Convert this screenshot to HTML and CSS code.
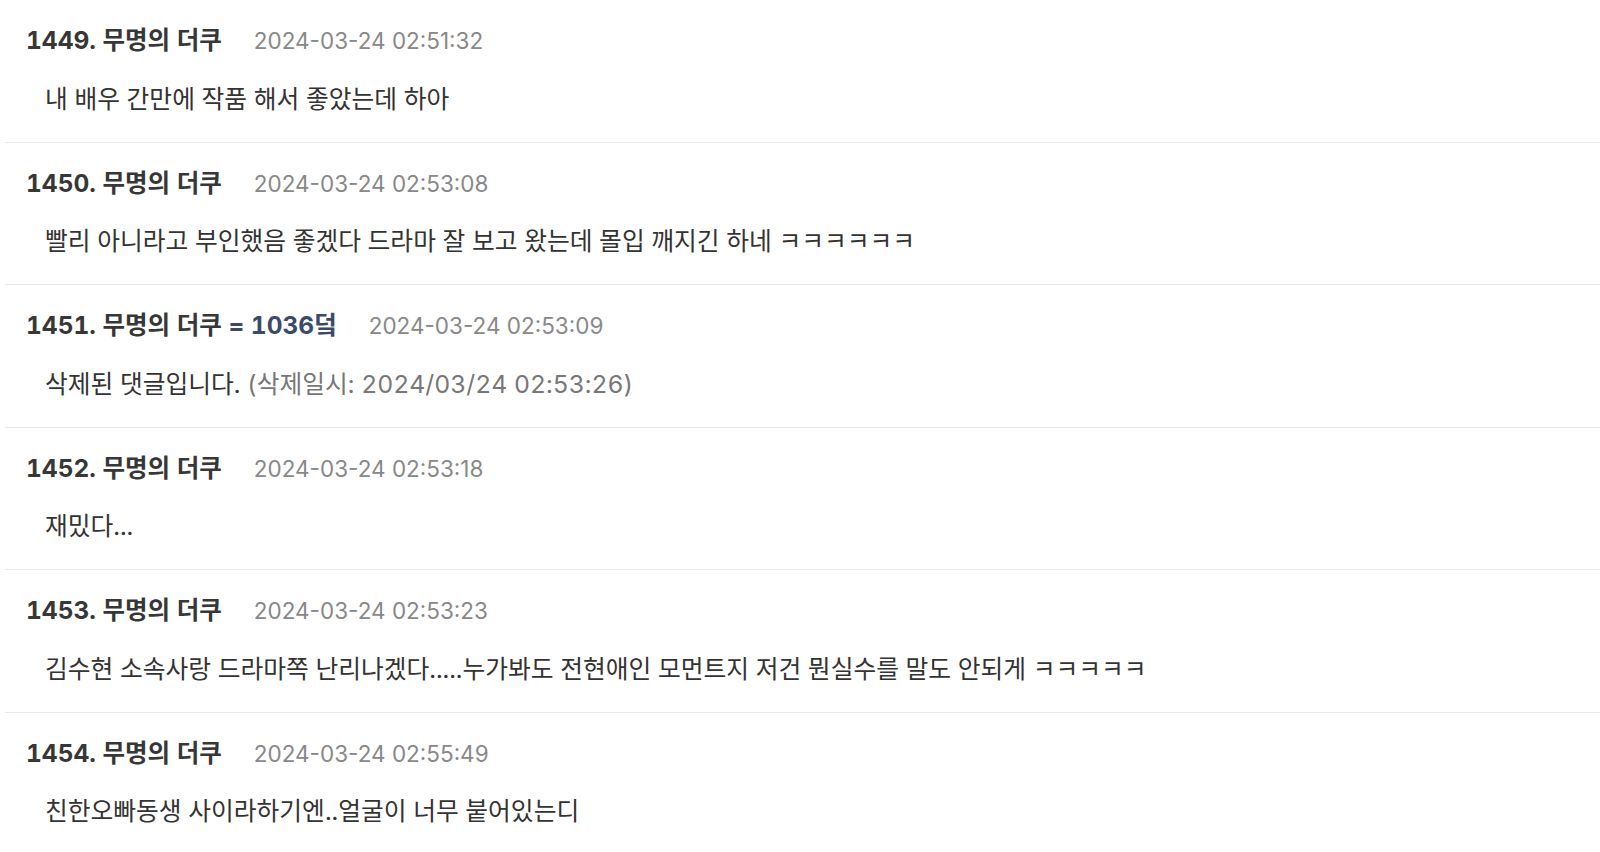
FILE: index.html
```html
<!DOCTYPE html>
<html lang="ko">
    <head>
        <meta charset="UTF-8">
        <title>댓글</title>
        <link rel="stylesheet" href="styles.css">
    </head>
    <body>
        <!-- 댓글 목록 -->
        <div class="comment-list">
            <div class="comment">
                <div class="comment-head">
                    <span class="comment-author">1449. 무명의 더쿠</span>
                    <span class="comment-date">2024-03-24 02:51:32</span>
                </div>
                <div class="comment-body">내 배우 간만에 작품 해서 좋았는데 하아</div>
            </div>

            <div class="comment">
                <div class="comment-head">
                    <span class="comment-author">1450. 무명의 더쿠</span>
                    <span class="comment-date">2024-03-24 02:53:08</span>
                </div>
                <div class="comment-body">빨리 아니라고 부인했음 좋겠다 드라마 잘 보고 왔는데 몰입 깨지긴 하네 ㅋㅋㅋㅋㅋㅋ</div>
            </div>

            <div class="comment">
                <div class="comment-head">
                    <span class="comment-author">1451. 무명의 더쿠 <span class="comment-count">= 1036덬</span></span>
                    <span class="comment-date">2024-03-24 02:53:09</span>
                </div>
                <div class="comment-body">삭제된 댓글입니다. <span class="deleted-at">(삭제일시: 2024/03/24 02:53:26)</span></div>
            </div>

            <div class="comment">
                <div class="comment-head">
                    <span class="comment-author">1452. 무명의 더쿠</span>
                    <span class="comment-date">2024-03-24 02:53:18</span>
                </div>
                <div class="comment-body">재밌다...</div>
            </div>

            <div class="comment">
                <div class="comment-head">
                    <span class="comment-author">1453. 무명의 더쿠</span>
                    <span class="comment-date">2024-03-24 02:53:23</span>
                </div>
                <div class="comment-body">김수현 소속사랑 드라마쪽 난리나겠다.....누가봐도 전현애인 모먼트지 저건 뭔실수를 말도 안되게 ㅋㅋㅋㅋㅋ</div>
            </div>

            <div class="comment">
                <div class="comment-head">
                    <span class="comment-author">1454. 무명의 더쿠</span>
                    <span class="comment-date">2024-03-24 02:55:49</span>
                </div>
                <div class="comment-body">친한오빠동생 사이라하기엔..얼굴이 너무 붙어있는디</div>
            </div>
        </div>
    </body>
</html>
```

FILE: styles.css
```css
/* === 기본 === */
body {
    margin: 0;
    background: #ffffff;
    color: #333333;
    font-family: Inter, "Noto Sans CJK KR", sans-serif;
}

/* === 댓글 목록 === */
.comment-list {
    padding-left: 5px;
}

.comment {
    padding: 24px 0 27px 21px;
    border-bottom: 1px solid #e9e9e9;
}

.comment-head {
    display: flex;
    align-items: baseline;
    gap: 32px;
    height: 32px;
    font-size: 24.5px;
    line-height: 32px;
}

.comment-author {
    font-weight: bold;
    color: #373737;
    font-variant-numeric: tabular-nums; /* 번호 폭 맞춤 */
}

.comment-count {
    color: #3b4a69;
}

.comment-date {
    font-size: 22.5px;
    color: #888888;
}

/* === 본문 === */
.comment-body {
    margin-top: 26.5px;
    padding-left: 19px;
    height: 32px;
    font-size: 24.75px;
    line-height: 32px;
    color: #333333;
    font-variant-numeric: tabular-nums;
}

.deleted-at {
    color: #777777;
}
```
